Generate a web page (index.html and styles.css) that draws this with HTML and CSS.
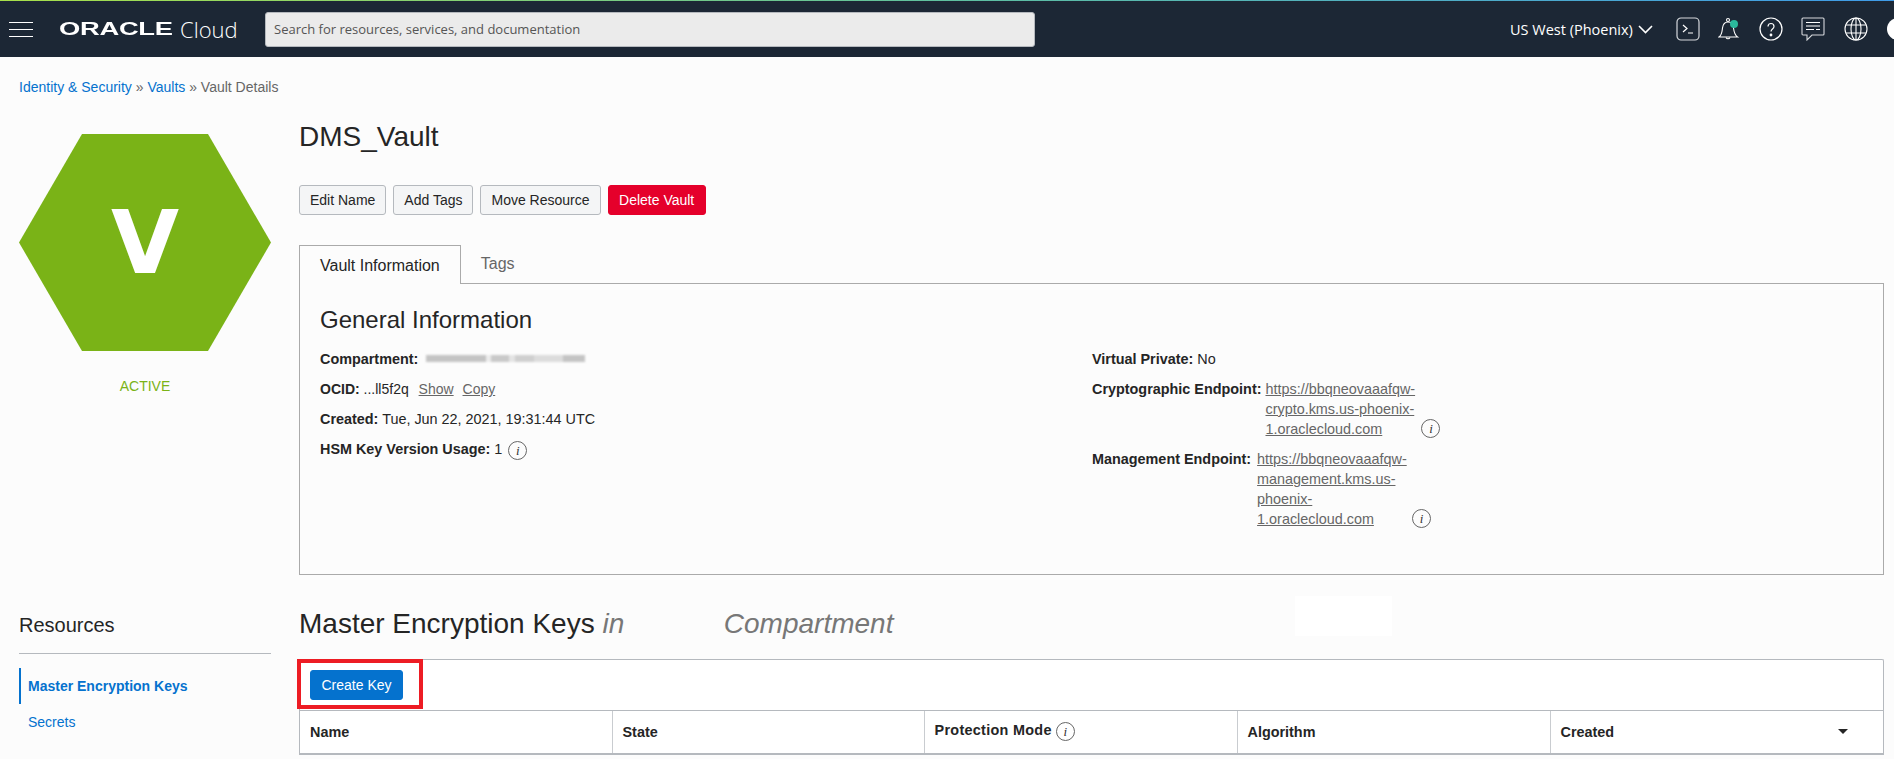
FILE: index.html
```html
<!DOCTYPE html>
<html lang="en">
<head>
    <meta charset="UTF-8">
    <meta name="viewport" content="width=device-width, initial-scale=1.0">
    <title>Vault Details</title>
    <link rel="stylesheet" href="styles.css">
</head>
<body>
    <header class="topbar">
        <div class="menu-icon"><span></span><span></span><span></span></div>
        <div class="brand"><span class="brand-oracle">ORACLE</span><span class="brand-cloud">Cloud</span></div>
        <div class="search">Search for resources, services, and documentation</div>
        <div class="region">US West (Phoenix)
            <svg width="15" height="9" viewBox="0 0 15 9"><path d="M1 1l6.500 6.500L14 1" fill="none" stroke="#fff" stroke-width="1.600"/></svg>
        </div>
        <div class="top-icons">
            <svg width="24" height="24" viewBox="0 0 24 24" fill="none" stroke="#d5d8dc" stroke-width="1.200"><rect x="1" y="1" width="22" height="22" rx="4"/><path d="M7 8l4 3.500-4 3.500M12 16h5" stroke="#fff"/></svg>
            <svg width="22" height="24" viewBox="0 0 22 24" fill="none" stroke="#fff" stroke-width="1.100"><path d="M1 20c3-2 3-5 3.500-9 .5-3.500 2.500-6 5.500-6s5 2.500 5.500 6c.5 4 1 7 4 9z"/><circle cx="10" cy="3" r="1.500"/><path d="M8 20.500a2.200 2.200 0 0 0 4 0"/><circle cx="16" cy="7" r="4" fill="#2bb89c" stroke="none"/></svg>
            <svg width="24" height="24" viewBox="0 0 24 24" fill="none" stroke="#fff" stroke-width="1.200"><circle cx="12" cy="12" r="11"/><path d="M9 9.500c0-4 6-4 6 0 0 2.500-3 2.500-3 5"/><circle cx="12" cy="18" r=".8" fill="#fff"/></svg>
            <svg width="24" height="24" viewBox="0 0 24 24" fill="none" stroke="#d5d8dc" stroke-width="1.100"><path d="M2 1h20a1 1 0 0 1 1 1v15a1 1 0 0 1-1 1H11l-5 5v-5H2a1 1 0 0 1-1-1V2a1 1 0 0 1 1-1z"/><path d="M5 5.500h14M5 9h14M5 12.500h8M15 12.500h4" stroke="#fff"/></svg>
            <svg width="24" height="24" viewBox="0 0 24 24" fill="none" stroke="#fff" stroke-width="1.100"><circle cx="12" cy="12" r="11"/><ellipse cx="12" cy="12" rx="5" ry="11"/><path d="M12 1v22M2 8h20M2 16h20"/></svg>
        </div>
        <div class="avatar"></div>
    </header>

    <nav class="breadcrumb"><a>Identity &amp; Security</a> » <a>Vaults</a> » Vault Details</nav>

    <div class="page">
        <aside class="sidebar">
            <div class="hexagon">V</div>
            <div class="status">ACTIVE</div>
            <h3 class="resources-title">Resources</h3>
            <ul class="resources">
                <li class="active">Master Encryption Keys</li>
                <li>Secrets</li>
            </ul>
        </aside>

        <main class="content">
            <h1>DMS_Vault</h1>
            <div class="actions">
                <button class="btn">Edit Name</button>
                <button class="btn">Add Tags</button>
                <button class="btn">Move Resource</button>
                <button class="btn btn-danger">Delete Vault</button>
            </div>

            <div class="tabs">
                <div class="tab selected">Vault Information</div>
                <div class="tab">Tags</div>
            </div>
            <section class="panel">
                <h2>General Information</h2>
                <div class="columns">
                    <div class="col">
                        <div class="field"><b>Compartment:</b> <span class="blurred"></span></div>
                        <div class="field ocid"><b>OCID:</b> ...ll5f2q <a class="link show">Show</a> <a class="link copy">Copy</a></div>
                        <div class="field"><b>Created:</b> Tue, Jun 22, 2021, 19:31:44 UTC</div>
                        <div class="field"><b>HSM Key Version Usage:</b> 1 <i class="info">i</i></div>
                    </div>
                    <div class="col">
                        <div class="field"><b>Virtual Private:</b> No</div>
                        <div class="endpoint">
                            <b>Cryptographic Endpoint:</b>
                            <a class="link url">https://bbqneovaaafqw-crypto.kms.us-phoenix-1.oraclecloud.com</a>
                            <i class="info">i</i>
                        </div>
                        <div class="endpoint mgmt">
                            <b>Management Endpoint:</b>
                            <a class="link url">https://bbqneovaaafqw-management.kms.us-phoenix-1.oraclecloud.com</a>
                            <i class="info">i</i>
                        </div>
                    </div>
                </div>
            </section>

            <h2 class="keys-title">Master Encryption Keys <em>in <span class="hidden-name"></span> Compartment</em></h2>
            <div class="mask"></div>

            <section class="keys">
                <div class="toolbar">
                    <button class="btn btn-primary">Create Key</button>
                    <div class="highlight"></div>
                </div>
                <table>
                    <thead>
                        <tr>
                            <th class="col-name">Name</th>
                            <th class="col-state">State</th>
                            <th class="col-mode">Protection Mode <i class="info">i</i></th>
                            <th class="col-algo">Algorithm</th>
                            <th>Created <span class="sort"></span></th>
                        </tr>
                    </thead>
                </table>
            </section>
        </main>
    </div>
</body>
</html>
```

FILE: styles.css
```css
html, body {
    margin: 0;
    height: 759px;
    overflow: hidden;
}
body {
    font-family: "Liberation Sans", Arial, sans-serif;
    font-size: 14px;
    color: #252525;
    background-color: #fcfcfc;
}

/* top bar */
.topbar {
    display: flex;
    align-items: center;
    height: 56px;
    background-color: #1c2735;
    border-top: 1px solid;
    border-image: linear-gradient(to right, #a8e04a, #5fc0a0 50%, #3f9be8) 1;
    overflow: hidden;
}
.menu-icon {
    display: flex;
    flex-direction: column;
    gap: 6px;
    width: 24px;
    margin-left: 9px;
    flex-shrink: 0;
}
.menu-icon span {
    height: 1px;
    background-color: #fff;
}
.brand {
    display: flex;
    align-items: center;
    width: 206px;
    margin-left: 26px;
    color: #fff;
    flex-shrink: 0;
}
.brand-oracle {
    font-size: 18px;
    font-weight: bold;
    width: 114px;
    transform: scaleX(1.520);
    transform-origin: left;
    letter-spacing: -.2px;
}
.brand-cloud {
    font-family: "Open Sans", sans-serif;
    font-weight: 300;
    font-size: 22px;
    margin-left: 7px;
}
.search {
    width: 760px;
    height: 33px;
    line-height: 33px;
    padding-left: 8px;
    background-color: #ebebeb;
    border: 1px solid #b5b9be;
    border-radius: 3px;
    font-family: "Open Sans", sans-serif;
    font-size: 13px;
    color: #555;
    flex-shrink: 0;
}
.region {
    display: flex;
    align-items: center;
    gap: 5px;
    margin-left: 475px;
    color: #fff;
    font-family: "Open Sans", sans-serif;
    font-size: 14.500px;
    white-space: nowrap;
    flex-shrink: 0;
}
.top-icons {
    display: flex;
    align-items: center;
    gap: 18.500px;
    margin-left: 23px;
    flex-shrink: 0;
}
.avatar {
    width: 22px;
    height: 22px;
    margin-left: 19px;
    border-radius: 50%;
    background-color: #fff;
    flex-shrink: 0;
}

.breadcrumb {
    padding: 22px 0 0 19px;
    height: 21px;
    color: #666;
}
.breadcrumb a, .resources li {
    color: #0572ce;
}

.page {
    display: flex;
    gap: 28px;
    padding: 0 10px 0 19px;
}

/* left column */
.sidebar {
    width: 252px;
    flex-shrink: 0;
}
.hexagon {
    display: flex;
    align-items: center;
    justify-content: center;
    height: 217px;
    margin-top: 34px;
    background-color: #7ab317;
    clip-path: polygon(25% 0, 75% 0, 100% 50%, 75% 100%, 25% 100%, 0 50%);
    color: #fff;
    font-family: "DejaVu Sans", sans-serif;
    font-weight: bold;
    font-size: 88px;
}
.status {
    margin-top: 27px;
    text-align: center;
    color: #7ab317;
}
.resources-title {
    margin: 220px 0 0;
    padding-bottom: 16px;
    border-bottom: 1px solid #b5b9be;
    font-size: 20px;
    font-weight: normal;
}
.resources {
    list-style-type: none;
    margin: 14px 0 0;
    padding: 0;
}
.resources li {
    padding: 9px 0 9px 7px;
    line-height: 18px;
    border-left: 2px solid transparent;
}
.resources li.active {
    font-weight: bold;
    border-left-color: #0572ce;
}

/* main column */
.content {
    position: relative;
    flex: 1;
    min-width: 0;
}
h1 {
    margin: 21px 0 0;
    font-size: 28px;
    font-weight: normal;
    line-height: 32px;
}
.actions {
    display: flex;
    gap: 7px;
    margin-top: 32px;
}
.btn {
    height: 30px;
    padding: 0 10px;
    border: 1px solid #b5b9be;
    border-radius: 3px;
    background-color: #f4f5f6;
    font-family: inherit;
    font-size: 14px;
    color: #252525;
}
.btn-danger {
    padding: 0 10.500px;
    background-color: #e5002b;
    border-color: #e5002b;
    color: #fff;
}
.btn-primary {
    width: 93px;
    padding: 0;
    background-color: #0572ce;
    border-color: #0572ce;
    color: #fff;
}
.tabs {
    display: flex;
    margin-top: 30px;
}
.tab {
    height: 38px;
    line-height: 38px;
    padding: 0 20px;
    font-size: 16px;
    color: #666;
    box-sizing: border-box;
}
.tab.selected {
    color: #252525;
    border: 1px solid #aaa;
    border-bottom: none;
    background-color: #fcfcfc;
    margin-bottom: -1px;
    height: 39px;
    line-height: 39px;
    position: relative;
}
.panel {
    padding: 0 20px;
    border: 1px solid #aaa;
    box-sizing: border-box;
    height: 292px;
}
.panel h2 {
    margin: 21px 0 0;
    font-size: 24px;
    font-weight: normal;
    line-height: 30px;
}
.columns {
    display: grid;
    grid-template-columns: 772px 1fr;
    margin-top: 9px;
    font-size: 14.400px;
}
.field {
    height: 30px;
    line-height: 30px;
    white-space: nowrap;
}
.ocid {
    font-size: 14px;
}
.field > .info {
    margin-left: 2px;
}
.link {
    color: #666;
    text-decoration: underline;
}
.show {
    margin-left: 6px;
}
.copy {
    margin-left: 5px;
}
.blurred {
    display: inline-block;
    width: 159px;
    height: 7px;
    margin-left: 4px;
    vertical-align: 2px;
    background: linear-gradient(to right, #c4c4c4 0 38%, #ececec 38% 41%, #c9c9c9 41% 52%, #e4e4e4 52% 56%, #cfcfcf 56% 68%, #dcdcdc 68% 86%, #c4c4c4 86%);
    filter: blur(1px);
}
.field + .endpoint {
    margin-top: 5px;
}
.endpoint {
    display: flex;
    align-items: flex-end;
    margin-bottom: 10px;
    line-height: 20px;
}
.endpoint b {
    align-self: flex-start;
    margin-right: 4px;
    white-space: nowrap;
}
.mgmt b {
    margin-right: 6px;
}
.url {
    width: 152px;
}
.endpoint .info {
    margin: 0 0 1px 4px;
}
.mgmt .info {
    margin-left: 3px;
}
.info {
    display: inline-block;
    width: 17px;
    height: 17px;
    line-height: 17px;
    border: 1px solid #666;
    border-radius: 50%;
    text-align: center;
    vertical-align: middle;
    font-family: "Liberation Serif", serif;
    font-size: 13px;
    font-weight: normal;
    color: #333;
}

.keys-title {
    margin: 33px 0 0;
    font-size: 28px;
    font-weight: normal;
    line-height: 32px;
    white-space: nowrap;
}
.keys-title em {
    color: #777;
}
.hidden-name {
    display: inline-block;
    width: 84px;
}
.mask {
    position: absolute;
    left: 996px;
    top: 496px;
    width: 97px;
    height: 40px;
    background-color: #fff;
}
.keys {
    margin-top: 19px;
    background-color: #fff;
    border: 1px solid #b5b9be;
    border-radius: 2px 2px 0 0;
    border-bottom: none;
}
.toolbar {
    position: relative;
    padding: 10px;
    height: 30px;
}
.highlight {
    position: absolute;
    left: -3px;
    top: -1px;
    width: 118px;
    height: 42px;
    border: 4px solid #ed1c24;
}
table {
    width: 100%;
    border-collapse: collapse;
    table-layout: fixed;
}
th {
    box-sizing: border-box;
    height: 43px;
    padding: 0 10px;
    text-align: left;
    font-size: 14.400px;
    border-top: 1px solid #b5b9be;
    border-bottom: 2px solid #b5b9be;
    border-left: 1px solid #c9ccd0;
    position: relative;
}
th:first-child {
    border-left: none;
}
.col-name {
    width: 312px;
}
.col-state {
    width: 312px;
}
.col-mode {
    width: 313px;
    letter-spacing: .3px;
}
.col-algo {
    width: 313px;
}
.sort {
    position: absolute;
    right: 35px;
    top: 18px;
    border-left: 5px solid transparent;
    border-right: 5px solid transparent;
    border-top: 5px solid #252525;
}
```
